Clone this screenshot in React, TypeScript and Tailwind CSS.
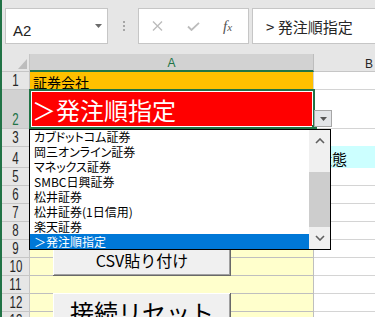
import React from "react";

const JP = "font-['Noto_Sans_CJK_JP',sans-serif]";

type RowDef = { n: number; h: string };

const rows: RowDef[] = [
  { n: 1, h: "h-[18px]" },
  { n: 2, h: "h-[39px]" },
  { n: 3, h: "h-[18px]" },
  { n: 4, h: "h-[21px]" },
  { n: 5, h: "h-[18px]" },
  { n: 6, h: "h-[18px]" },
  { n: 7, h: "h-[18px]" },
  { n: 8, h: "h-[18px]" },
  { n: 9, h: "h-[18px]" },
  { n: 10, h: "h-[18px]" },
  { n: 11, h: "h-[18px]" },
  { n: 12, h: "h-[18px]" },
  { n: 13, h: "h-[18px]" },
];

const listItems = [
  "カブドットコム証券",
  "岡三オンライン証券",
  "マネックス証券",
  "SMBC日興証券",
  "松井証券",
  "松井証券(1日信用)",
  "楽天証券",
  "＞発注順指定",
];

function ACell({ n }: { n: number }) {
  if (n === 1) {
    return (
      <div className={`w-[284px] shrink-0 bg-[#ffc000] border-r border-b border-[#d4d4d4] flex items-end pl-[3px] text-[14px] leading-none text-black ${JP}`}>
        証券会社
      </div>
    );
  }
  if (n === 2) {
    return (
      <div className={`w-[284px] shrink-0 bg-[#ff0000] border-r border-b border-[#d4d4d4] flex items-end pl-[2px] pb-[6px] text-[24px] leading-none text-white ${JP}`}>
        ＞発注順指定
      </div>
    );
  }
  if (n >= 9) {
    return <div className="w-[284px] shrink-0 bg-[#ffffcc] border-r border-b border-[#bfbfbf]" />;
  }
  return <div className="w-[284px] shrink-0 bg-white border-r border-b border-[#d4d4d4]" />;
}

function BCell({ n }: { n: number }) {
  if (n === 4) {
    return (
      <div className={`w-[110px] shrink-0 bg-[#ccffff] flex items-end pl-[3px] pb-[2px] text-[15px] leading-none text-black ${JP}`}>
        状態
      </div>
    );
  }
  if (n === 3) {
    return <div className="w-[110px] shrink-0 bg-white border-b border-[#ccffff]" />;
  }
  return <div className="w-[110px] shrink-0 bg-white border-b border-[#d4d4d4]" />;
}

function Chevron({ up }: { up: boolean }) {
  return (
    <svg width="10" height="6" viewBox="0 0 10 6">
      <polyline
        points={up ? "1,5 5,1 9,5" : "1,1 5,5 9,1"}
        fill="none"
        stroke="#606060"
        strokeWidth="1.6"
      />
    </svg>
  );
}

export default function App() {
  return (
    <div className="relative w-[375px] h-[317px] overflow-hidden bg-[#e6e6e6] flex font-['Liberation_Sans','Noto_Sans_CJK_JP',sans-serif]">
      <div className="w-[2px] shrink-0 bg-[#217346]" />
      <div className="flex-1 flex flex-col min-w-0">
        {/* Formula bar */}
        <div className="h-[54px] shrink-0 flex items-start pt-[8px]">
          <div className="ml-[3px] w-[103px] h-[36px] shrink-0 bg-white border border-[#c6c6c6] flex items-start">
            <span className="mt-[14px] ml-[7px] text-[15px] leading-none text-[#222]">A2</span>
            <svg className="ml-auto mr-[5px] mt-[15px]" width="7" height="4" viewBox="0 0 7 4">
              <polygon points="0,0 7,0 3.5,4" fill="#6b6b6b" />
            </svg>
          </div>
          <div className="ml-[15px] mt-[13px] flex flex-col gap-[2px] shrink-0">
            <div className="w-[2px] h-[2px] bg-[#a6a6a6]" />
            <div className="w-[2px] h-[2px] bg-[#a6a6a6]" />
            <div className="w-[2px] h-[2px] bg-[#a6a6a6]" />
          </div>
          <div className="ml-[13px] w-[111px] h-[36px] shrink-0 bg-white border border-[#c6c6c6] flex items-center">
            <svg className="ml-[13px]" width="11" height="10" viewBox="0 0 11 10">
              <path d="M1 0.5 L10 9.5 M10 0.5 L1 9.5" stroke="#bcbcbc" strokeWidth="1.4" fill="none" />
            </svg>
            <svg className="ml-[24px]" width="13" height="9" viewBox="0 0 13 9">
              <path d="M1 4.5 L4.5 8 L12 0.8" stroke="#bcbcbc" strokeWidth="1.8" fill="none" />
            </svg>
            <span className="ml-[23px] font-['Liberation_Serif',serif] italic text-[15px] leading-none text-[#555]">
              f<span className="text-[11px]">x</span>
            </span>
          </div>
          <div className={`ml-[3px] w-[140px] h-[36px] shrink-0 bg-white border border-[#c6c6c6] flex items-center pl-[13px] text-[15px] leading-none text-[#262626] ${JP}`}>
            &gt; 発注順指定
          </div>
        </div>

        {/* Grid */}
        <div className="flex flex-col">
          <div className="flex h-[18px] shrink-0">
            <div className="w-[28px] shrink-0 bg-[#e6e6e6] border-r border-b border-[#c6c6c6] flex items-end justify-end pr-[2px] pb-[2px]">
              <svg width="9" height="10" viewBox="0 0 9 10">
                <polygon points="9,0 9,10 0,10" fill="#bdbdbd" />
              </svg>
            </div>
            <div className="w-[284px] shrink-0 bg-[#d2d2d2] border-r border-[#bdbdbd] border-b-2 border-b-[#217346] flex items-end justify-center text-[12px] leading-none text-[#217346] pb-[1px]">
              A
            </div>
            <div className="w-[110px] shrink-0 bg-[#e6e6e6] border-b border-[#c6c6c6] flex items-end justify-center text-[12px] leading-none text-[#262626] pb-[1px]">
              B
            </div>
          </div>
          {rows.map((r) => (
            <div key={r.n} className={`flex shrink-0 ${r.h}`}>
              <div
                className={`w-[28px] shrink-0 border-r border-b border-[#c6c6c6] flex items-end justify-center ${
                  r.n === 2 ? "bg-[#d2d2d2] text-[#217346]" : "bg-[#e6e6e6] text-[#262626]"
                }`}
              >
                <span className="inline-block scale-x-[0.72] text-[16px] leading-none">{r.n}</span>
              </div>
              <ACell n={r.n} />
              <BCell n={r.n} />
            </div>
          ))}
        </div>
      </div>

      {/* selection outline */}
      <div className="absolute left-[29px] top-[89px] w-[286px] h-[40px] border-2 border-[#217346] shadow-[inset_0_0_0_1px_#ffffff]" />
      <div className="absolute left-[312px] top-[125px] w-[5px] h-[5px] bg-[#217346]" />

      {/* dropdown button */}
      <div className="absolute left-[314px] top-[110px] w-[18px] h-[17px] bg-[#e3e5e8] border border-[#a6a6a6] flex items-center justify-center">
        <svg width="7" height="4" viewBox="0 0 7 4">
          <polygon points="0,0 7,0 3.5,4" fill="#555" />
        </svg>
      </div>

      {/* sheet buttons */}
      <div className={`absolute left-[53px] top-[241px] w-[178px] h-[35px] bg-[#f0f0f0] shadow-[inset_-1px_-1px_0_#696969,inset_1px_1px_0_#ffffff,inset_-2px_-2px_0_#a0a0a0] flex items-center justify-center pt-[2px] text-[16px] leading-none text-black ${JP}`}>
        CSV貼り付け
      </div>
      <div className={`absolute left-[53px] top-[293px] w-[178px] h-[40px] bg-[#f0f0f0] shadow-[inset_-1px_-1px_0_#696969,inset_1px_1px_0_#ffffff,inset_-2px_-2px_0_#a0a0a0] flex items-start justify-center pt-[7px] text-[24px] leading-none text-black ${JP}`}>
        接続リセット
      </div>

      {/* dropdown list */}
      <div className="absolute left-[29px] top-[129px] w-[302px] h-[121px] border border-black bg-white flex">
        <div className="w-[279px] flex flex-col">
          {listItems.map((t, i) => (
            <div
              key={t}
              className={`h-[14.875px] shrink-0 flex items-center pl-[4px] text-[12px] leading-none [font-feature-settings:'palt'] ${JP} ${
                i === listItems.length - 1 ? "bg-[#0078d7] text-white" : "text-black"
              }`}
            >
              {t}
            </div>
          ))}
        </div>
        <div className="w-[21px] bg-[#f0f0f0] flex flex-col">
          <div className="h-[21px] shrink-0 flex items-center justify-center">
            <Chevron up />
          </div>
          <div className="h-[21px] shrink-0" />
          <div className="h-[55px] shrink-0 bg-[#cdcdcd]" />
          <div className="flex-1 flex items-center justify-center">
            <Chevron up={false} />
          </div>
        </div>
      </div>
    </div>
  );
}
